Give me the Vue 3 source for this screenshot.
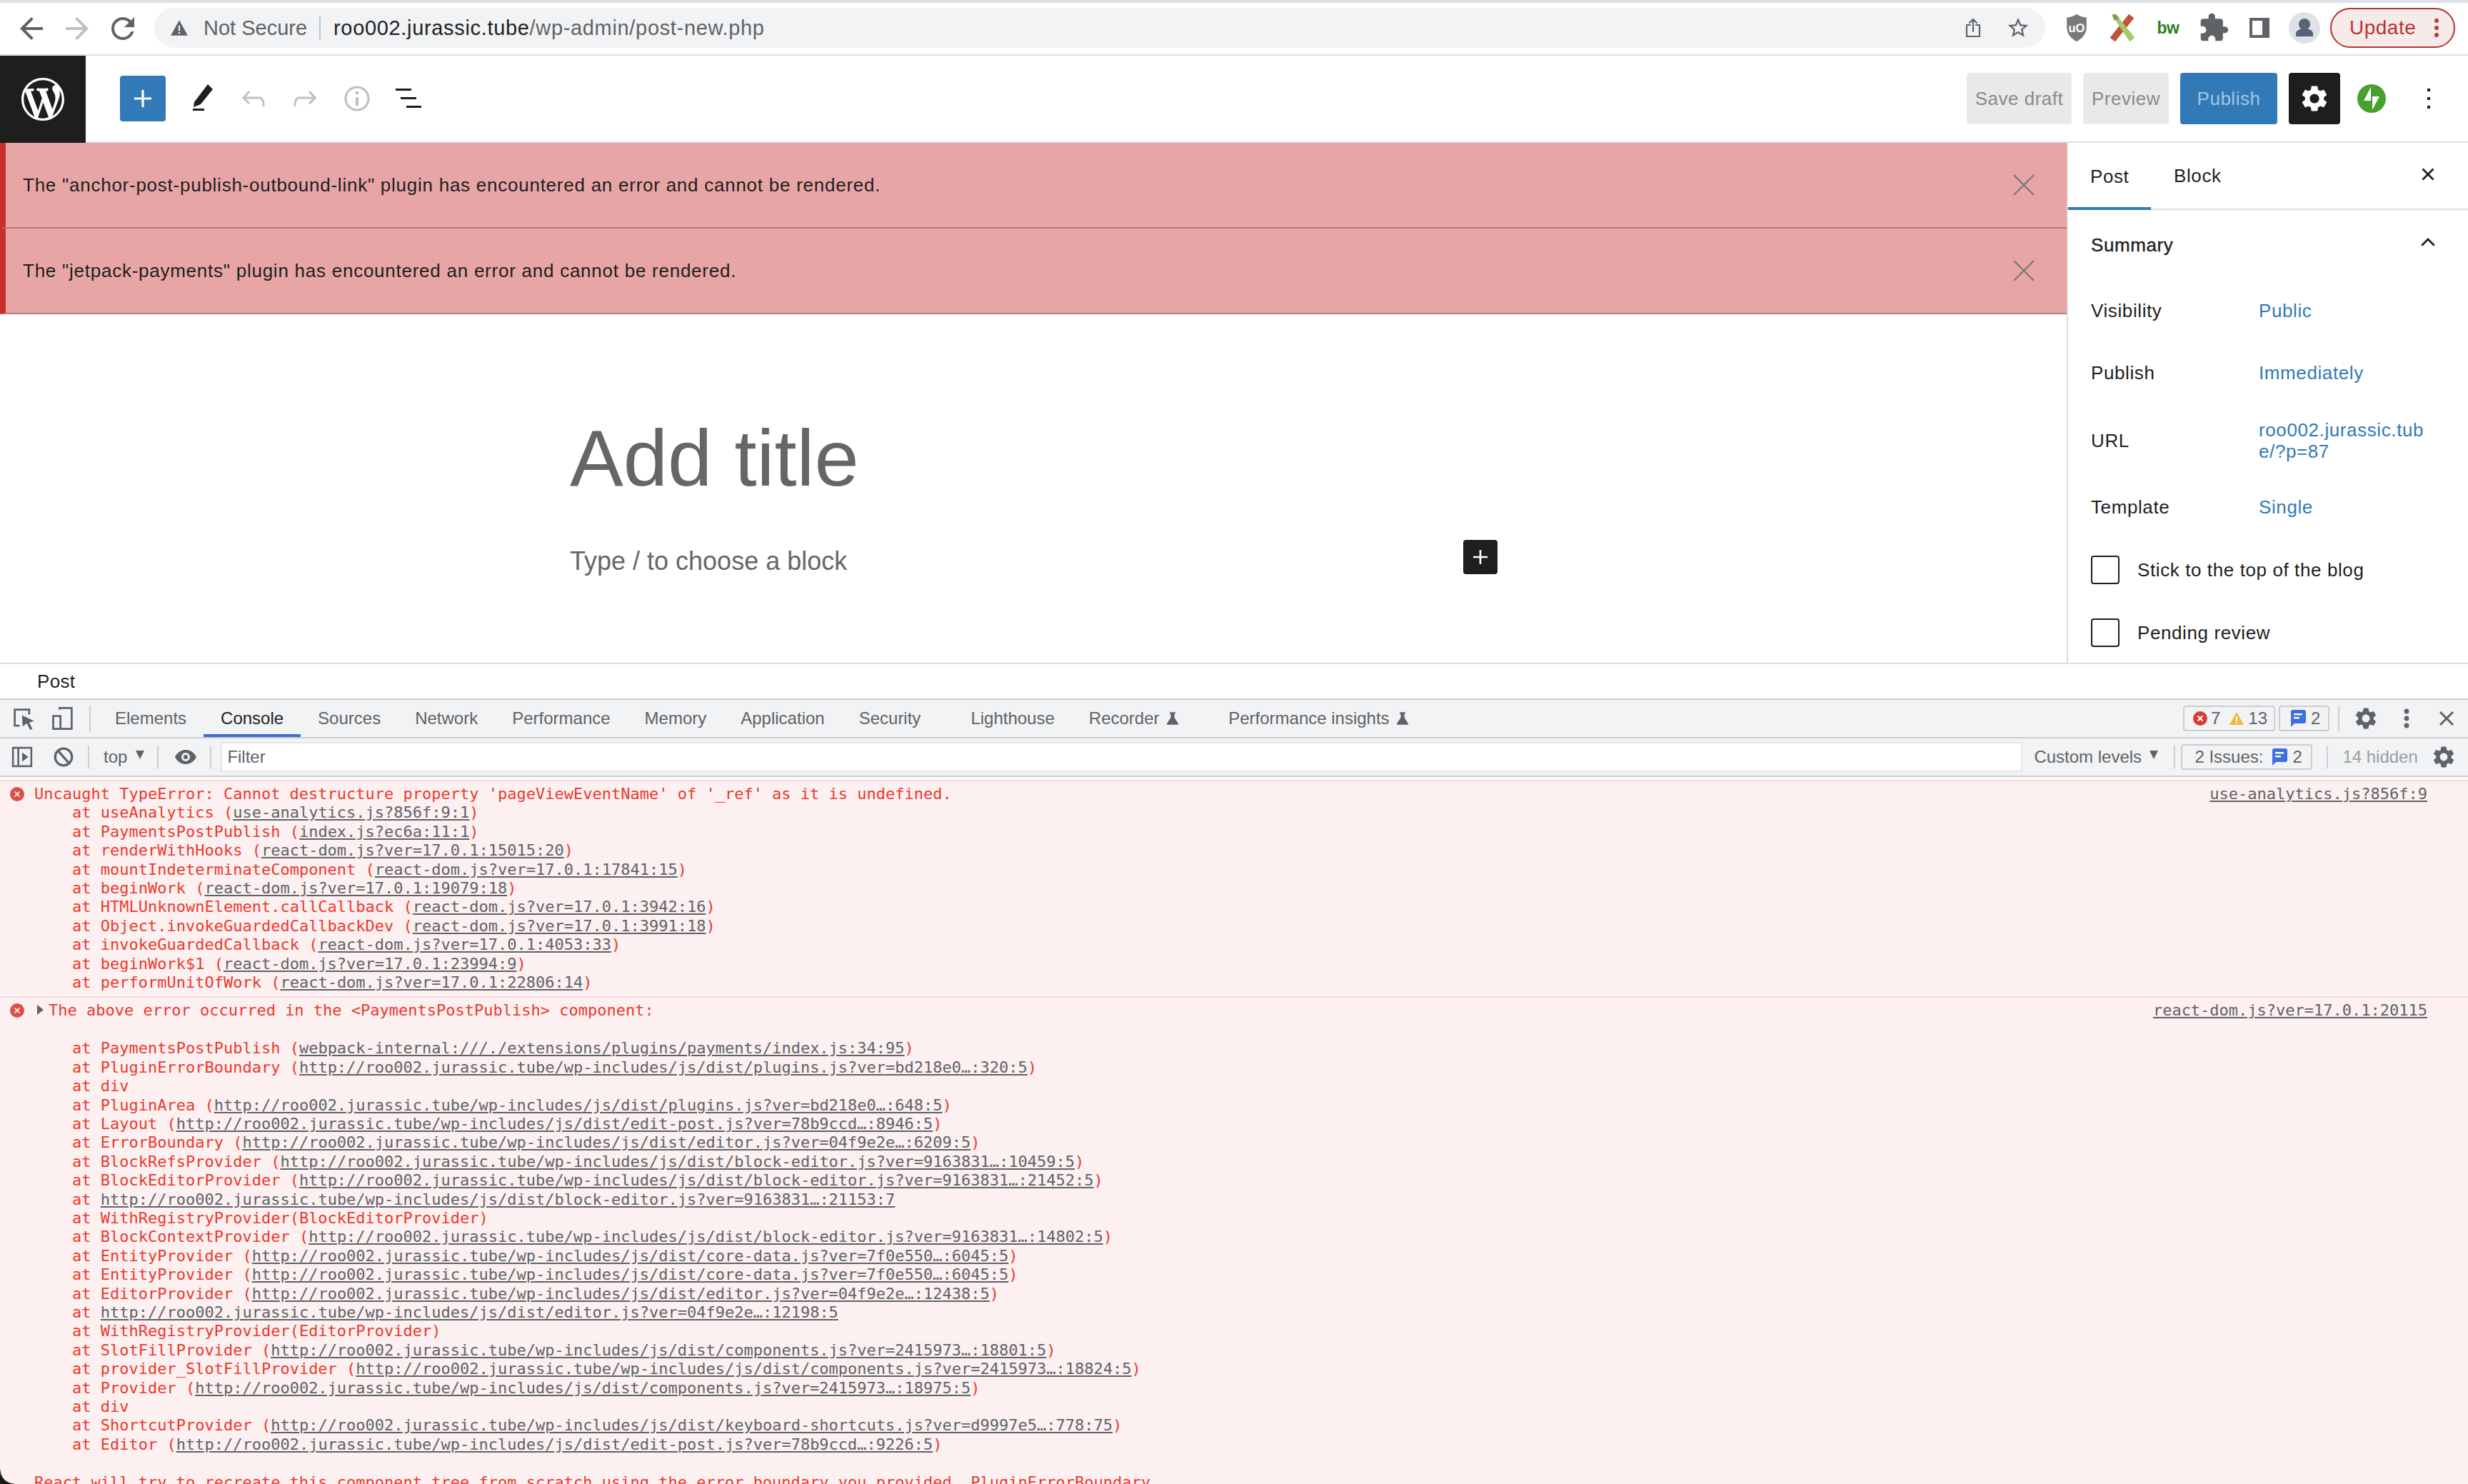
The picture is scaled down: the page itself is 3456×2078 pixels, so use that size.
<script setup>
const plus = 'M18 11.2h-5.2V6h-1.6v5.2H6v1.6h5.2V18h1.6v-5.2H18z'
const gear = 'M19.14 12.94c.04-.3.06-.61.06-.94 0-.32-.02-.64-.07-.94l2.03-1.58a.49.49 0 0 0 .12-.61l-1.92-3.32a.488.488 0 0 0-.59-.22l-2.39.96c-.5-.38-1.03-.7-1.62-.94l-.36-2.54a.484.484 0 0 0-.48-.41h-3.84c-.24 0-.43.17-.47.41l-.36 2.54c-.59.24-1.13.57-1.62.94l-2.39-.96c-.22-.08-.47 0-.59.22L2.74 8.87c-.12.21-.08.47.12.61l2.03 1.58c-.05.3-.09.63-.09.94s.02.64.07.94l-2.03 1.58a.49.49 0 0 0-.12.61l1.92 3.32c.12.22.37.29.59.22l2.39-.96c.5.38 1.03.7 1.62.94l.36 2.54c.05.24.24.41.48.41h3.84c.24 0 .44-.17.47-.41l.36-2.54c.59-.24 1.13-.56 1.62-.94l2.39.96c.22.08.47 0 .59-.22l1.92-3.32c.12-.22.07-.47-.12-.61l-2.01-1.58zM12 15.6c-1.98 0-3.6-1.62-3.6-3.6s1.62-3.6 3.6-3.6 3.6 1.62 3.6 3.6-1.62 3.6-3.6 3.6z'
const wp = 'M20 10c0-5.52-4.48-10-10-10S0 4.48 0 10s4.48 10 10 10 10-4.48 10-10zM7.78 15.37L4.37 6.22c.55-.02 1.17-.08 1.17-.08.5-.06.44-1.13-.06-1.11 0 0-1.45.11-2.37.11-.18 0-.37 0-.58-.01C4.12 2.69 6.87 1.11 10 1.11c2.33 0 4.45.87 6.05 2.34-.68-.11-1.65.39-1.65 1.58 0 .74.45 1.36.9 2.1.35.61.55 1.36.55 2.46 0 1.49-1.4 5-1.4 5l-3.03-8.37c.54-.02.82-.17.82-.17.5-.05.44-1.25-.06-1.22 0 0-1.44.12-2.38.12-.87 0-2.33-.12-2.33-.12-.5-.03-.56 1.2-.06 1.22l.92.08 1.26 3.41zM17.41 10c.24-.64.74-1.87.43-4.25.7 1.29 1.05 2.71 1.05 4.25 0 3.29-1.73 6.24-4.4 7.78.97-2.59 1.94-5.2 2.92-7.78zM6.1 18.09C3.12 16.65 1.11 13.53 1.11 10c0-1.3.23-2.48.72-3.59C3.25 10.3 4.67 14.2 6.1 18.09zm4.03-6.63l2.58 6.98c-.86.29-1.76.45-2.71.45-.79 0-1.57-.11-2.29-.33.81-2.38 1.62-4.74 2.42-7.1z'

const notices = [
  'The "anchor-post-publish-outbound-link" plugin has encountered an error and cannot be rendered.',
  'The "jetpack-payments" plugin has encountered an error and cannot be rendered.'
]
const summary = [
  { k: 'Visibility', v: ['Public'], c: 'r-vis' },
  { k: 'Publish', v: ['Immediately'], c: 'r-pub' },
  { k: 'URL', v: ['roo002.jurassic.tub', 'e/?p=87'], c: 'r-url' },
  { k: 'Template', v: ['Single'], c: 'r-tpl' }
]
const tabs = [
  { t: 'Elements' }, { t: 'Console', active: true }, { t: 'Sources' }, { t: 'Network' },
  { t: 'Performance' }, { t: 'Memory' }, { t: 'Application' }, { t: 'Security' },
  { t: 'Lighthouse', c: 'tab-light' }, { t: 'Recorder', flask: true }, { t: 'Performance insights', flask: true, c: 'tab-ins' }
]
const R = 'react-dom.js?ver=17.0.1:'
const stack1 = [
  ['useAnalytics', 'use-analytics.js?856f:9:1'],
  ['PaymentsPostPublish', 'index.js?ec6a:11:1'],
  ['renderWithHooks', R + '15015:20'],
  ['mountIndeterminateComponent', R + '17841:15'],
  ['beginWork', R + '19079:18'],
  ['HTMLUnknownElement.callCallback', R + '3942:16'],
  ['Object.invokeGuardedCallbackDev', R + '3991:18'],
  ['invokeGuardedCallback', R + '4053:33'],
  ['beginWork$1', R + '23994:9'],
  ['performUnitOfWork', R + '22806:14']
]
const D = 'http://roo002.jurassic.tube/wp-includes/js/dist/'
const stack2 = [
  { n: 'PaymentsPostPublish', l: 'webpack-internal:///./extensions/plugins/payments/index.js:34:95' },
  { n: 'PluginErrorBoundary', l: D + 'plugins.js?ver=bd218e0…:320:5' },
  { n: 'div' },
  { n: 'PluginArea', l: D + 'plugins.js?ver=bd218e0…:648:5' },
  { n: 'Layout', l: D + 'edit-post.js?ver=78b9ccd…:8946:5' },
  { n: 'ErrorBoundary', l: D + 'editor.js?ver=04f9e2e…:6209:5' },
  { n: 'BlockRefsProvider', l: D + 'block-editor.js?ver=9163831…:10459:5' },
  { n: 'BlockEditorProvider', l: D + 'block-editor.js?ver=9163831…:21452:5' },
  { bare: D + 'block-editor.js?ver=9163831…:21153:7' },
  { n: 'WithRegistryProvider(BlockEditorProvider)' },
  { n: 'BlockContextProvider', l: D + 'block-editor.js?ver=9163831…:14802:5' },
  { n: 'EntityProvider', l: D + 'core-data.js?ver=7f0e550…:6045:5' },
  { n: 'EntityProvider', l: D + 'core-data.js?ver=7f0e550…:6045:5' },
  { n: 'EditorProvider', l: D + 'editor.js?ver=04f9e2e…:12438:5' },
  { bare: D + 'editor.js?ver=04f9e2e…:12198:5' },
  { n: 'WithRegistryProvider(EditorProvider)' },
  { n: 'SlotFillProvider', l: D + 'components.js?ver=2415973…:18801:5' },
  { n: 'provider_SlotFillProvider', l: D + 'components.js?ver=2415973…:18824:5' },
  { n: 'Provider', l: D + 'components.js?ver=2415973…:18975:5' },
  { n: 'div' },
  { n: 'ShortcutProvider', l: D + 'keyboard-shortcuts.js?ver=d9997e5…:778:75' },
  { n: 'Editor', l: D + 'edit-post.js?ver=78b9ccd…:9226:5' }
]
</script>

<template>
  <div class="page">
    <div class="strip"></div>

    <header class="chrome">
      <svg class="nav" viewBox="0 0 24 24"><path fill="#5f6368" d="M20 11H7.83l5.59-5.59L12 4l-8 8 8 8 1.41-1.41L7.83 13H20v-2z"/></svg>
      <svg class="nav" viewBox="0 0 24 24"><path fill="#bdc1c6" d="M4 11h12.17l-5.59-5.59L12 4l8 8-8 8-1.41-1.41L16.17 13H4v-2z"/></svg>
      <svg class="nav" viewBox="0 0 24 24"><path fill="#5f6368" d="M17.65 6.35C16.2 4.9 14.21 4 12 4c-4.42 0-7.99 3.58-7.99 8s3.57 8 7.99 8c3.73 0 6.84-2.55 7.73-6h-2.08c-.82 2.33-3.04 4-5.65 4-3.31 0-6-2.69-6-6s2.69-6 6-6c1.66 0 3.14.69 4.22 1.78L13 11h7V4l-2.35 2.35z"/></svg>

      <div class="omni">
        <svg class="warn" viewBox="0 0 24 24"><path fill="#5f6368" d="M12 2 L23 22 H1 Z"/><rect x="11" y="9" width="2" height="7" fill="#f1f3f4"/><rect x="11" y="17.5" width="2" height="2" fill="#f1f3f4"/></svg>
        <span class="ns">Not Secure</span>
        <span class="omni-sep"></span>
        <span class="url"><b>roo002.jurassic.tube</b><i>/wp-admin/post-new.php</i></span>
        <svg class="share" viewBox="0 0 24 30"><path fill="none" stroke="#5f6368" stroke-width="2.2" stroke-linecap="round" stroke-linejoin="round" d="M8 11H3v16h18V11h-5M12 20V3M7 8l5-5 5 5"/></svg>
        <svg class="star" viewBox="0 0 24 24"><path fill="#5f6368" d="M22 9.24l-7.19-.62L12 2 9.19 8.63 2 9.24l5.46 4.73L5.82 21 12 17.27 18.18 21l-1.63-7.03L22 9.24zM12 15.4l-3.76 2.27 1-4.28-3.32-2.88 4.38-.38L12 6.1l1.71 4.04 4.38.38-3.32 2.88 1 4.28L12 15.4z"/></svg>
      </div>

      <div class="exts">
        <svg class="ext" viewBox="0 0 48 48">
          <path fill="#7a7a7a" d="M24 3 C30 7 35 8 39 8 V24 C39 34 31 41 24 45 C17 41 9 34 9 24 V8 C13 8 18 7 24 3Z"/>
          <text x="24" y="31" text-anchor="middle" class="uo">uO</text>
        </svg>
        <svg class="ext" viewBox="0 0 48 48">
          <path fill="#c0533a" d="M34 3 L42 9 L13 45 L5 39 Z"/>
          <path fill="#a8c96a" d="M8 4 L14 3 L43 39 L35 45 Z"/>
          <path fill="#7f9e48" d="M8 4 L14 3 L19 9 L12 13 Z"/>
        </svg>
        <span class="bw">bw</span>
        <svg class="ext" viewBox="0 0 24 24"><path fill="#5f6368" d="M20.5 11H19V7c0-1.1-.9-2-2-2h-4V3.5C13 2.12 11.88 1 10.5 1S8 2.12 8 3.5V5H4c-1.1 0-1.99.9-1.99 2v3.8H3.5c1.49 0 2.7 1.21 2.7 2.7s-1.21 2.7-2.7 2.7H2V20c0 1.1.9 2 2 2h3.8v-1.5c0-1.49 1.21-2.7 2.7-2.7 1.49 0 2.7 1.21 2.7 2.7V22H17c1.1 0 2-.9 2-2v-4h1.5c1.38 0 2.5-1.12 2.5-2.5S21.88 11 20.5 11z"/></svg>
        <svg class="ext" viewBox="0 0 44 44"><path fill="#5f6368" fill-rule="evenodd" d="M8 8H36V36H8Z M12 12V32H26V12Z"/></svg>
        <div class="avatar">
          <svg viewBox="0 0 44 44"><circle cx="22" cy="17" r="8" fill="#56637a"/><path fill="#56637a" d="M10 34v-4c0-4 5-7 12-7s12 3 12 7v4z"/></svg>
        </div>
        <div class="update">
          <span>Update</span>
          <svg class="dots" viewBox="0 0 8 28"><circle cx="4" cy="4" r="3" fill="#c0392f"/><circle cx="4" cy="14" r="3" fill="#c0392f"/><circle cx="4" cy="24" r="3" fill="#c0392f"/></svg>
        </div>
      </div>
    </header>

    <div class="wp-top">
      <div class="wp-logo"><svg viewBox="0 0 20 20"><path fill="#fff" :d="wp"/></svg></div>
      <button class="inserter"><svg viewBox="0 0 24 24"><path fill="#fff" :d="plus"/></svg></button>
      <svg class="tool tool-first" viewBox="0 0 48 48">
        <path fill="#1e1e1e" d="M33 4 L40 11 L23 32 L13 36 L14 29 Z"/>
        <rect x="12" y="38" width="16" height="3" fill="#1e1e1e"/>
      </svg>
      <svg class="tool" viewBox="0 0 24 24"><path fill="#c0c0c0" d="M18.3 11.7c-.6-.6-1.4-.9-2.3-.9H6.7l2.9-3.3-1.1-1-4.5 5L8.5 16l1-1-2.7-2.7H16c.5 0 .9.2 1.3.5 1 1 1 3.4 1 4.5v.3h1.5v-.2c0-1.5 0-4.3-1.5-5.7z"/></svg>
      <svg class="tool" viewBox="0 0 24 24"><path fill="#c0c0c0" d="M15.6 6.5l-1.1 1 2.9 3.3H8c-.9 0-1.7.3-2.3.9-1.4 1.5-1.4 4.2-1.4 5.6v.2h1.5v-.3c0-1.1 0-3.5 1-4.5.3-.3.7-.5 1.3-.5h9.2L14.5 15l1.1 1.1 4.6-4.6-4.6-5z"/></svg>
      <svg class="tool" viewBox="0 0 24 24"><path fill="#c0c0c0" d="M12 3.2c-4.8 0-8.8 3.9-8.8 8.8 0 4.8 3.9 8.8 8.8 8.8 4.8 0 8.8-3.9 8.8-8.8 0-4.8-4-8.8-8.8-8.8zm0 16c-4 0-7.2-3.3-7.2-7.2C4.8 8 8 4.8 12 4.8s7.2 3.3 7.2 7.2c0 4-3.2 7.2-7.2 7.2zM11 17h2v-6h-2v6zm0-8h2V7h-2v2z"/></svg>
      <svg class="tool" viewBox="0 0 48 48"><rect x="6" y="10" width="22" height="3" fill="#1e1e1e"/><rect x="13" y="22" width="22" height="3" fill="#1e1e1e"/><rect x="21" y="34" width="21" height="3" fill="#1e1e1e"/></svg>
      <div class="top-right">
        <button class="btn btn-grey btn-save">Save draft</button>
        <button class="btn btn-grey btn-prev">Preview</button>
        <button class="btn btn-pub">Publish</button>
        <button class="btn btn-set"><svg viewBox="0 0 24 24"><path fill="#fff" :d="gear"/></svg></button>
        <svg class="jetpack" viewBox="0 0 40 40"><circle cx="20" cy="20" r="20" fill="#48a12f"/><path fill="#fff" d="M19 4 V23 H9 Z M21 36 V17 H31 Z"/></svg>
        <svg class="kebab" viewBox="0 0 6 32"><rect x="1" y="2" width="4" height="4" fill="#1e1e1e"/><rect x="1" y="14" width="4" height="4" fill="#1e1e1e"/><rect x="1" y="26" width="4" height="4" fill="#1e1e1e"/></svg>
      </div>
    </div>

    <div class="editor">
      <main class="canvas">
        <div v-for="n in notices" :key="n" class="notice">
          <span>{{ n }}</span>
          <svg class="nx" viewBox="0 0 30 30"><path d="M1 1 L29 29 M29 1 L1 29" stroke="#7a7a7a" stroke-width="2.4" fill="none"/></svg>
        </div>
        <div class="doc">
          <h1 class="title">Add title</h1>
          <div class="para">
            <span>Type / to choose a block</span>
            <button class="mini"><svg viewBox="0 0 24 24"><path fill="#fff" :d="plus"/></svg></button>
          </div>
        </div>
      </main>
      <aside class="side">
        <div class="side-tabs">
          <span class="stab stab-on">Post</span>
          <span class="stab">Block</span>
          <svg class="sx" viewBox="0 0 24 24"><path d="M6 6 L18 18 M18 6 L6 18" stroke="#1e1e1e" stroke-width="2.2" fill="none"/></svg>
        </div>
        <div class="sum-head">
          <span>Summary</span>
          <svg class="chev" viewBox="0 0 24 24"><path d="M5 15 L12 8 L19 15" stroke="#1e1e1e" stroke-width="2.2" fill="none"/></svg>
        </div>
        <div v-for="r in summary" :key="r.k" class="sum-row" :class="r.c">
          <span class="sum-k">{{ r.k }}</span>
          <span class="sum-v"><span v-for="l in r.v" :key="l">{{ l }}</span></span>
        </div>
        <label class="chk chk-one"><span class="box"></span>Stick to the top of the blog</label>
        <label class="chk chk-two"><span class="box"></span>Pending review</label>
      </aside>
    </div>

    <div class="crumb">Post</div>

    <section class="dev">
      <div class="dev-tabs">
        <svg class="dic dic-a" viewBox="0 0 32 32">
          <path fill="none" stroke="#5f6368" stroke-width="2.4" d="M15 5H5v20h6"/><path fill="none" stroke="#5f6368" stroke-width="2.4" d="M15 5h8v6"/>
          <path fill="#5f6368" d="M14 12 L29 19 L23 21 L27 29 L24 30 L20 22 L15 26 Z"/>
        </svg>
        <svg class="dic dic-b" viewBox="0 0 32 32">
          <path fill="none" stroke="#5f6368" stroke-width="2.4" d="M12 5V3h15v26H12"/><rect x="4" y="13" width="9" height="16" fill="none" stroke="#5f6368" stroke-width="2.4"/>
        </svg>
        <span class="vsep vsep-tab"></span>
        <span v-for="t in tabs" :key="t.t" class="dtab" :class="[t.c, { 'dtab-on': t.active }]">
          {{ t.t }}
          <svg v-if="t.flask" class="flask" viewBox="0 0 16 16"><path fill="#5f6368" d="M5 1h6v2H10v4l4.5 7a1 1 0 0 1-1 1h-11a1 1 0 0 1-1-1L6 7V3H5z"/></svg>
        </span>
        <div class="dt-right">
          <span class="badge badge-a">
            <svg class="b-err" viewBox="0 0 20 20"><circle cx="10" cy="10" r="10" fill="#d93a35"/><path d="M6.5 6.5 L13.5 13.5 M13.5 6.5 L6.5 13.5" stroke="#fff" stroke-width="2"/></svg>
            <span>7</span>
            <svg class="b-warn" viewBox="0 0 20 20"><path fill="#eebb3a" d="M10 1 L20 19 H0 Z"/><rect x="9" y="7" width="2" height="7" fill="#fff"/><rect x="9" y="15" width="2" height="2" fill="#fff"/></svg>
            <span>13</span>
          </span>
          <span class="badge badge-b">
            <svg class="b-msg" viewBox="0 0 22 24"><path fill="#3c6fdf" d="M3 0H19a3 3 0 0 1 3 3V16a3 3 0 0 1-3 3H6L1 24V3a3 3 0 0 1 2-3Z"/><rect x="5" y="5" width="12" height="2.4" fill="#fff"/><rect x="5" y="10" width="8" height="2.4" fill="#fff"/></svg>
            <span>2</span>
          </span>
          <span class="vsep vsep-r"></span>
          <svg class="r-gear" viewBox="0 0 24 24"><path fill="#5f6368" :d="gear"/></svg>
          <svg class="r-dots" viewBox="0 0 8 28"><circle cx="4" cy="4" r="3.4" fill="#5f6368"/><circle cx="4" cy="14" r="3.4" fill="#5f6368"/><circle cx="4" cy="24" r="3.4" fill="#5f6368"/></svg>
          <svg class="r-x" viewBox="0 0 20 20"><path d="M1 1 L19 19 M19 1 L1 19" stroke="#5f6368" stroke-width="3" fill="none"/></svg>
        </div>
      </div>

      <div class="dev-filter">
        <svg class="fi fi-a" viewBox="0 0 28 28"><rect x="2" y="2" width="24" height="24" fill="none" stroke="#5f6368" stroke-width="2.4"/><path d="M9 2V26" stroke="#5f6368" stroke-width="2.4"/><path fill="#5f6368" d="M14 8 L22 14 L14 20Z"/></svg>
        <svg class="fi fi-b" viewBox="0 0 28 28"><circle cx="14" cy="14" r="11" fill="none" stroke="#5f6368" stroke-width="3"/><path d="M7 6 L21 22" stroke="#5f6368" stroke-width="3"/></svg>
        <span class="vsep vsep-f1"></span>
        <span class="top">top</span>
        <span class="tri"></span>
        <span class="vsep vsep-f2"></span>
        <svg class="fi fi-eye" viewBox="0 0 32 24"><path fill="#5f6368" fill-rule="evenodd" d="M16 2C8 2 3 8 1 12c2 4 7 10 15 10s13-6 15-10C29 8 24 2 16 2Zm0 4a6 6 0 1 1 0 12 6 6 0 0 1 0-12Z"/><circle cx="16" cy="12" r="3" fill="#5f6368"/></svg>
        <span class="vsep vsep-f3"></span>
        <div class="filter">Filter</div>
        <span class="levels">Custom levels</span>
        <span class="tri tri-l"></span>
        <span class="vsep vsep-f4"></span>
        <span class="issues">
          2 Issues:
          <svg class="b-msg" viewBox="0 0 22 24"><path fill="#3c6fdf" d="M3 0H19a3 3 0 0 1 3 3V16a3 3 0 0 1-3 3H6L1 24V3a3 3 0 0 1 2-3Z"/><rect x="5" y="5" width="12" height="2.4" fill="#fff"/><rect x="5" y="10" width="8" height="2.4" fill="#fff"/></svg>
          2
        </span>
        <span class="vsep vsep-f5"></span>
        <span class="hidden-count">14 hidden</span>
        <svg class="r-gear f-gear" viewBox="0 0 24 24"><path fill="#5f6368" :d="gear"/></svg>
      </div>

      <div class="console">
        <div class="msg msg-one">
          <svg class="merr" viewBox="0 0 20 20"><circle cx="10" cy="10" r="10" fill="#d9504b"/><path d="M6.5 6.5 L13.5 13.5 M13.5 6.5 L6.5 13.5" stroke="#fff" stroke-width="1.6"/></svg>
          <a class="src">use-analytics.js?856f:9</a>
          <div class="ln">Uncaught TypeError: Cannot destructure property 'pageViewEventName' of '_ref' as it is undefined.</div>
          <div v-for="s in stack1" :key="s[0]" class="ln at">at {{ s[0] }} (<a>{{ s[1] }}</a>)</div>
        </div>
        <div class="msg msg-two">
          <svg class="merr" viewBox="0 0 20 20"><circle cx="10" cy="10" r="10" fill="#d9504b"/><path d="M6.5 6.5 L13.5 13.5 M13.5 6.5 L6.5 13.5" stroke="#fff" stroke-width="1.6"/></svg>
          <a class="src">react-dom.js?ver=17.0.1:20115</a>
          <div class="ln"><span class="caret"></span>The above error occurred in the &lt;PaymentsPostPublish&gt; component:</div>
          <div class="ln">&nbsp;</div>
          <div v-for="(s, i) in stack2" :key="i" class="ln at"><template v-if="s.bare">at <a>{{ s.bare }}</a></template><template v-else-if="s.l">at {{ s.n }} (<a>{{ s.l }}</a>)</template><template v-else>at {{ s.n }}</template></div>
          <div class="ln">&nbsp;</div>
          <div class="ln">React will try to recreate this component tree from scratch using the error boundary you provided, PluginErrorBoundary.</div>
        </div>
      </div>
    </section>
    <div class="corner"></div>
  </div>
</template>

<style>
html, body { margin: 0; background: #fff; overflow: hidden; }
</style>

<style scoped>
* { box-sizing: border-box; }
.page { position: relative; width: 3456px; height: 2078px; overflow: hidden; background: #fff; font-family: "Liberation Sans", Arial, sans-serif; color: #1e1e1e; }
.strip { height: 4px; background: #dee1e6; }

.chrome { height: 74px; border-bottom: 2px solid #dfe0e3; display: flex; align-items: center; padding-left: 20px; gap: 16px; }
.nav { width: 48px; height: 48px; flex: none; }
.omni { width: 2648px; height: 56px; margin-left: 4px; background: #f1f3f4; border-radius: 28px; display: flex; align-items: center; padding-left: 22px; font-size: 29px; flex: none; margin-top: -2px; }
.warn { width: 26px; height: 26px; flex: none; }
.ns { color: #5f6368; margin-left: 21px; width: 147px; white-space: nowrap; }
.omni-sep { width: 2px; height: 32px; background: #bdc1c6; margin-left: 15px; }
.url { margin-left: 18px; white-space: nowrap; width: 2282px; letter-spacing: .67px; }
.url b { font-weight: 400; color: #202124; }
.url i { font-style: normal; color: #5f6368; }
.share { width: 24px; height: 30px; flex: none; margin-left: 2px; }
.star { width: 34px; height: 34px; flex: none; margin-left: 34px; }
.exts { display: flex; align-items: center; gap: 16px; margin-left: 4px; margin-top: -2px; }
.ext { width: 44px; height: 44px; margin: 0 2px; flex: none; }
.uo { font: 700 18px "Liberation Sans", sans-serif; fill: #fff; }
.bw { width: 48px; text-align: center; font: 700 23px "Liberation Sans", sans-serif; color: #2f7d1e; letter-spacing: -.5px; }
.avatar { width: 44px; height: 44px; border-radius: 50%; background: #dfe1e6; margin-left: 1px; }
.avatar svg { width: 44px; height: 44px; display: block; }
.update { width: 175px; height: 56px; margin-left: -2px; border: 2px solid #b8352b; border-radius: 28px; background: #f7eaea; color: #b8352b; font-size: 28px; letter-spacing: .5px; display: flex; align-items: center; padding-left: 25px; }
.dots { width: 8px; height: 28px; margin-left: 25px; }

.wp-top { height: 122px; border-bottom: 2px solid #e0e0e0; display: flex; align-items: center; }
.wp-logo { width: 120px; height: 122px; background: #1e1e1e; display: flex; align-items: center; justify-content: center; margin-bottom: -2px; }
.wp-logo svg { width: 60px; height: 60px; }
.inserter { width: 64px; height: 64px; margin-left: 48px; border: 0; padding: 8px; border-radius: 4px; background: #3279b7; display: flex; }
.inserter svg { width: 48px; height: 48px; }
.tool { width: 48px; height: 48px; margin-left: 24.6px; flex: none; }
.tool-first { margin-left: 26px; }
.top-right { margin-left: auto; display: flex; align-items: center; padding-right: 52px; }
.btn { height: 72px; border: 0; border-radius: 4px; font: 26px "Liberation Sans", sans-serif; letter-spacing: .5px; padding: 0; }
.btn-grey { background: #e9e9e9; color: #8a8a8a; }
.btn-save { width: 147px; }
.btn-prev { width: 120px; margin-left: 16px; }
.btn-pub { width: 136px; margin-left: 16px; background: #3279b7; color: #a3c4e0; }
.btn-set { width: 72px; margin-left: 16px; background: #1e1e1e; display: flex; align-items: center; justify-content: center; }
.btn-set svg { width: 44px; height: 44px; }
.jetpack { width: 40px; height: 40px; margin-left: 24px; flex: none; }
.kebab { width: 6px; height: 32px; margin-left: 57px; flex: none; }

.editor { height: 730px; display: flex; border-bottom: 2px solid #e0e0e0; }
.canvas { width: 2894px; flex: none; display: flex; flex-direction: column; }
.notice { height: 120px; flex: none; border-left: 8px solid #c7302c; border-bottom: 2px solid #b47c7c; background: #e8a5a5; display: flex; align-items: center; justify-content: space-between; padding: 0 45px 0 24px; font-size: 26px; letter-spacing: .75px; color: #1e1e1e; }
.nx { width: 30px; height: 30px; }
.doc { flex: 1; padding-left: 798px; position: relative; }
.title { margin: 146px 0 0; font-size: 112px; line-height: 1; font-weight: 400; color: #666; }
.para { margin-top: 58px; display: flex; align-items: center; width: 1299px; height: 48px; justify-content: space-between; font-size: 36px; color: #666; }
.para span { margin-top: 12px; }
.mini { width: 48px; height: 48px; border: 0; border-radius: 4px; background: #1e1e1e; padding: 4px; display: flex; }
.mini svg { width: 40px; height: 40px; }

.side { flex: 1; border-left: 2px solid #e0e0e0; font-size: 26px; letter-spacing: .6px; }
.side-tabs { height: 94px; border-bottom: 2px solid #ddd; display: flex; align-items: center; position: relative; }
.stab { height: 94px; line-height: 94px; padding: 0 31px; flex: none; }
.stab-on { width: 116px; border-bottom: 4px solid #3279b7; margin-bottom: -2px; }
.stab + .stab { padding: 0 0 0 32px; }
.sx { width: 30px; height: 30px; margin-left: auto; margin-right: 41px; margin-top: -4px; }
.sum-head { height: 98px; display: flex; align-items: center; justify-content: space-between; padding: 0 41px 0 32px; font-weight: 500; -webkit-text-stroke: .4px #1e1e1e; }
.chev { width: 30px; height: 30px; margin-top: -6px; }
.sum-row { display: flex; align-items: center; padding-left: 32px; }
.r-vis { height: 86px; }
.r-pub { height: 88px; }
.r-url { height: 102px; }
.r-tpl { height: 84px; }
.sum-k { width: 235px; flex: none; }
.sum-v { color: #3279b7; display: flex; flex-direction: column; line-height: 30px; }
.chk { display: flex; align-items: center; padding-left: 32px; gap: 25px; color: #1e1e1e; }
.chk-one { height: 92px; }
.chk-two { height: 84px; }
.box { width: 40px; height: 40px; border: 2px solid #1e1e1e; border-radius: 4px; flex: none; }

.crumb { height: 48px; line-height: 48px; padding-left: 52px; font-size: 26px; letter-spacing: .3px; }

.dev { border-top: 2px solid #cbcdd1; height: 1100px; background: #fcf0f0; }
.dev-tabs { height: 54px; background: #f1f3f4; border-bottom: 2px solid #cbcdd1; display: flex; align-items: center; font-size: 24px; color: #5f6368; }
.dic { width: 36px; height: 36px; flex: none; }
.dic-a { margin-left: 15px; }
.dic-b { margin-left: 19px; }
.vsep { width: 2px; background: #cdd0d4; flex: none; height: 32px; }
.vsep-tab { margin-left: 19px; height: 36px; }
.dtab { height: 52px; line-height: 52px; padding: 0 24px; position: relative; white-space: nowrap; flex: none; }
.vsep-tab + .dtab { margin-left: 10px; }
.dtab-on { color: #202124; border-bottom: 4px solid #3b6fd4; }
.tab-light { margin-left: 22px; }
.flask { width: 20px; height: 20px; vertical-align: -2px; margin-left: 2px; }
.tab-ins { margin-left: 20px; }
.dt-right { margin-left: auto; display: flex; align-items: center; padding-right: 20px; }
.badge { height: 36px; border: 2px solid #cbcdd1; border-radius: 4px; display: flex; align-items: center; color: #5f6368; font-size: 24px; }
.badge-a { width: 129px; padding-left: 12px; }
.badge-b { width: 71px; margin-left: 5px; padding-left: 14px; }
.b-err { width: 20px; height: 20px; margin-right: 5px; }
.b-warn { width: 20px; height: 20px; margin: 0 6px 0 13px; }
.b-msg { width: 22px; height: 24px; margin-right: 7px; }
.vsep-r { margin-left: 12px; height: 36px; }
.r-gear { width: 36px; height: 36px; flex: none; }
.dt-right .r-gear { margin-left: 19px; }
.r-dots { width: 8px; height: 28px; margin-left: 35px; }
.r-x { width: 20px; height: 20px; margin-left: 42px; }

.dev-filter { height: 54px; background: #f1f3f4; border-bottom: 2px solid #cbcdd1; display: flex; align-items: center; font-size: 24px; color: #5f6368; }
.fi { flex: none; }
.fi-a { width: 30px; height: 30px; margin-left: 16px; }
.fi-b { width: 30px; height: 32px; margin-left: 28px; }
.vsep-f1 { margin-left: 19px; height: 32px; }
.top { margin-left: 20px; }
.tri { width: 0; height: 0; border-left: 6px solid transparent; border-right: 6px solid transparent; border-top: 12px solid #5f6368; margin-left: 12px; flex: none; margin-top: -6px; }
.vsep-f2 { margin-left: 18px; }
.fi-eye { width: 32px; height: 24px; margin-left: 22px; }
.vsep-f3 { margin-left: 18px; }
.filter { width: 2523px; height: 42px; margin-left: 13px; border: 2px solid #e3e5e8; background: #fff; line-height: 38px; padding-left: 7px; color: #5f6368; flex: none; }
.levels { margin-left: 16px; white-space: nowrap; width: 152px; }
.tri-l { margin-left: 10px; }
.vsep-f4 { margin-left: 22px; }
.issues { width: 184px; height: 36px; margin-left: 8px; border: 2px solid #cbcdd1; border-radius: 4px; display: flex; align-items: center; gap: 6px; padding-left: 17px; white-space: nowrap; }
.issues .b-msg { margin: 0 1px 0 6px; }
.vsep-f5 { margin-left: 20px; }
.hidden-count { margin-left: 20px; color: #9aa0a6; white-space: nowrap; width: 106px; }
.f-gear { margin-left: 18px; }

.console { height: 990px; padding-top: 4px; background: #fff; overflow: hidden; }
.msg { position: relative; background: #fcf0f0; border-top: 2px solid #f6d9d9; padding-left: 48px; padding-right: 57px; font: 22px/26.4px "DejaVu Sans Mono", monospace; color: #ea3a2e; white-space: pre; }
.msg-one { padding-top: 5px; padding-bottom: 6px; }
.msg-two { padding-top: 5px; height: 800px; }
.msg a { color: #5f6368; text-decoration: underline; }
.at { padding-left: 53px; }
.src { float: right; }
.merr { position: absolute; left: 14px; top: 8px; width: 20px; height: 20px; }
.caret { display: inline-block; width: 0; height: 0; border-top: 7px solid transparent; border-bottom: 7px solid transparent; border-left: 9px solid #5f6368; margin: 0 7px 0 4px; vertical-align: 1px; }
.corner { position: absolute; left: 0; bottom: 0; width: 20px; height: 20px; background: radial-gradient(circle at 100% 0, transparent 19px, #1a1a1a 20px); }
</style>
